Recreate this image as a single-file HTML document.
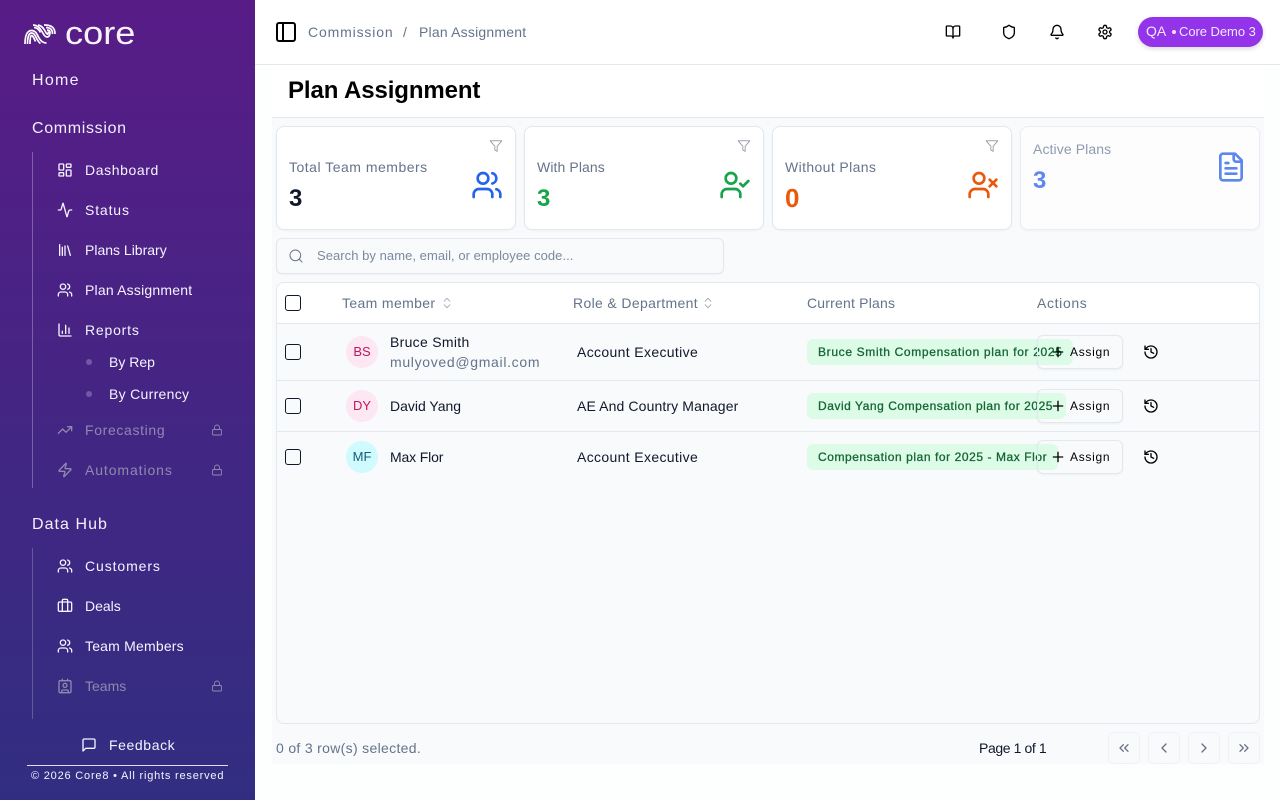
<!DOCTYPE html>
<html lang="en"><head><meta charset="utf-8"><title>Plan Assignment</title>
<style>
*{box-sizing:border-box}
html,body{margin:0;padding:0;width:1280px;height:800px;overflow:hidden;background:#fdfefe;font-family:"Liberation Sans",sans-serif}
.t{position:absolute;white-space:nowrap;line-height:20px;height:20px;font-size:14px}
.a{position:absolute}
svg.i{position:absolute;fill:none;stroke:currentColor;stroke-width:2;stroke-linecap:round;stroke-linejoin:round}
#side{position:absolute;left:0;top:0;width:255px;height:800px;background:linear-gradient(180deg,#581c87,#312e81);color:#f5f3ff}
#side .h{font-size:16px;color:#f3effa}
#side .off{color:#8f89ad}
.card{position:absolute;top:126px;width:240px;height:104px;background:#fff;border:1px solid #e2e8f0;border-radius:8px;box-shadow:0 1px 2px rgba(0,0,0,.04)}
.lbl{color:#64748b}
.num{font-size:24px;font-weight:700;line-height:28px;height:28px}
.th{color:#64748b}
.cb{position:absolute;left:285px;width:16px;height:16px;border:1.3px solid #0f172a;border-radius:3px;background:transparent}
.av{position:absolute;left:346px;width:32px;height:32px;border-radius:50%;font-size:13px;line-height:31px;text-align:center}
.name{color:#0f172a}
.bd{position:absolute;left:807px;height:26px;background:#dcfce7;border-radius:6px;color:#166534;font-size:12px;font-weight:400;-webkit-text-stroke:.3px #166534;line-height:26px;padding-left:11px;white-space:nowrap;overflow:visible}
.btn{position:absolute;left:1037px;width:86px;height:34px;border:1px solid #e2e8f0;border-radius:6px;box-shadow:0 1px 2px rgba(0,0,0,.05)}
.pg{position:absolute;top:732px;width:32px;height:32px;border:1px solid #eef1f6;border-radius:6px;background:#f9fafc;color:#6b7280}
</style></head><body>
<svg width="0" height="0" style="position:absolute"><defs>
<symbol id="users" viewBox="0 0 24 24"><path d="M16 21v-2a4 4 0 0 0-4-4H6a4 4 0 0 0-4 4v2"/><circle cx="9" cy="7" r="4"/><path d="M22 21v-2a4 4 0 0 0-3-3.87"/><path d="M16 3.13a4 4 0 0 1 0 7.75"/></symbol>
<symbol id="lock" viewBox="0 0 24 24"><rect x="3" y="11" width="18" height="11" rx="2"/><path d="M7 11V7a5 5 0 0 1 10 0v4"/></symbol>
<symbol id="funnel" viewBox="0 0 24 24"><path d="M22 3H2l8 9.46V19l4 2v-8.54L22 3z"/></symbol>
<symbol id="history" viewBox="0 0 24 24"><path d="M3 12a9 9 0 1 0 9-9 9.75 9.75 0 0 0-6.74 2.74L3 8"/><path d="M3 3v5h5"/><path d="M12 7v5l4 2"/></symbol>
<symbol id="plus" viewBox="0 0 24 24"><path d="M5 12h14"/><path d="M12 5v14"/></symbol>
<symbol id="updown" viewBox="0 0 24 24"><path d="m7 15 5 5 5-5"/><path d="m7 9 5-5 5 5"/></symbol>
</defs></svg>

<div id="side">
<svg class="a" style="left:24px;top:24px" width="32" height="20" viewBox="0 0 32 20" fill="none" stroke="#fff" stroke-width="1.700">
<path d="M1 20C1 12 3 6.500 7.500 6.500c4.500 0 5.500 4 7.500 7.500 2 3.500 4 5 7.500 5"/>
<path d="M3.500 20C3.500 13 5 9 7.500 9c3 0 4 3.500 6 7 1.200 2 2 3 3 3.500"/>
<path d="M6 20c0-5 .5-8.500 1.500-8.500 1.500 0 2.500 3 4 6"/>
<path d="M9 1c4.500 0 7 3 9 6.500 2 3.500 3 5.500 5 5.500 2.500 0 3-3 3-5"/>
<path d="M10 3.500c3 0 5 2.300 6.500 5"/>
<path d="M14 1c3 .5 5 2.500 6.500 5 1.200 2 2 4.200 3 4.200.7 0 .8-1.500.8-2.700"/>
<path d="M20 1C27 1 31 3 31 10"/><path d="M22 3.500c4.500 0 6.500 2 6.500 6.500"/><path d="M23 6c2 0 3 1 3 2.500"/>
</svg>
<div class="a" style="left:65px;top:13px;font-size:32px;line-height:40px;letter-spacing:0;color:#f7f2fb;transform:scaleX(1.13);transform-origin:0 50%">core</div>
<div class="t h" style="left:32px;top:71px;letter-spacing:1.3px">Home</div>
<div class="t h" style="left:32px;top:119px;letter-spacing:.67px">Commission</div>
<div class="a" style="left:32px;top:152px;width:1px;height:336px;background:rgba(255,255,255,.28)"></div>

<svg class="i" style="left:57px;top:162px" width="16" height="16" viewBox="0 0 24 24"><rect x="3" y="3" width="7" height="9" rx="1"/><rect x="14" y="3" width="7" height="5" rx="1"/><rect x="14" y="12" width="7" height="9" rx="1"/><rect x="3" y="16" width="7" height="5" rx="1"/></svg>
<div class="t" style="left:85px;top:160px;letter-spacing:.6px">Dashboard</div>
<svg class="i" style="left:57px;top:202px" width="16" height="16" viewBox="0 0 24 24"><path d="M22 12h-2.480a2 2 0 0 0-1.930 1.460l-2.350 8.360a.25.25 0 0 1-.48 0L9.240 2.180a.25.25 0 0 0-.48 0l-2.350 8.360A2 2 0 0 1 4.490 12H2"/></svg>
<div class="t" style="left:85px;top:200px;letter-spacing:.85px">Status</div>
<svg class="i" style="left:57px;top:242px" width="16" height="16" viewBox="0 0 24 24"><path d="m16 6 4 14"/><path d="M12 6v14"/><path d="M8 8v12"/><path d="M4 4v16"/></svg>
<div class="t" style="left:85px;top:240px">Plans Library</div>
<svg class="i" style="left:57px;top:282px" width="16" height="16"><use href="#users"/></svg>
<div class="t" style="left:85px;top:280px;letter-spacing:.2px">Plan Assignment</div>
<svg class="i" style="left:57px;top:322px" width="16" height="16" viewBox="0 0 24 24"><path d="M3 3v16a2 2 0 0 0 2 2h16"/><path d="M18 17V9"/><path d="M13 17V5"/><path d="M8 17v-3"/></svg>
<div class="t" style="left:85px;top:320px;letter-spacing:.8px">Reports</div>
<div class="a" style="left:86px;top:359px;width:6px;height:6px;border-radius:50%;background:#7457a6"></div>
<div class="t" style="left:109px;top:352px">By Rep</div>
<div class="a" style="left:86px;top:391px;width:6px;height:6px;border-radius:50%;background:#7457a6"></div>
<div class="t" style="left:109px;top:384px;letter-spacing:.3px">By Currency</div>
<svg class="i off" style="left:57px;top:422px" width="16" height="16" viewBox="0 0 24 24"><polyline points="22 7 13.500 15.500 8.500 10.500 2 17"/><polyline points="16 7 22 7 22 13"/></svg>
<div class="t off" style="left:85px;top:420px;letter-spacing:.65px">Forecasting</div>
<svg class="i off" style="left:211px;top:423px;stroke-width:1.800" width="12" height="14"><use href="#lock"/></svg>
<svg class="i off" style="left:57px;top:462px" width="16" height="16" viewBox="0 0 24 24"><path d="M4 14a1 1 0 0 1-.78-1.630l9.900-10.200a.5.5 0 0 1 .86.46l-1.920 6.020A1 1 0 0 0 13 10h7a1 1 0 0 1 .78 1.630l-9.900 10.200a.5.5 0 0 1-.86-.46l1.920-6.020A1 1 0 0 0 11 14z"/></svg>
<div class="t off" style="left:85px;top:460px;letter-spacing:.9px">Automations</div>
<svg class="i off" style="left:211px;top:463px;stroke-width:1.800" width="12" height="14"><use href="#lock"/></svg>

<div class="t h" style="left:32px;top:515px;letter-spacing:1.05px">Data Hub</div>
<div class="a" style="left:32px;top:548px;width:1px;height:171px;background:rgba(255,255,255,.22)"></div>
<svg class="i" style="left:57px;top:558px" width="16" height="16"><use href="#users"/></svg>
<div class="t" style="left:85px;top:556px;letter-spacing:.9px">Customers</div>
<svg class="i" style="left:57px;top:598px" width="16" height="16" viewBox="0 0 24 24"><path d="M16 20V4a2 2 0 0 0-2-2h-4a2 2 0 0 0-2 2v16"/><rect x="2" y="6" width="20" height="14" rx="2"/></svg>
<div class="t" style="left:85px;top:596px">Deals</div>
<svg class="i" style="left:57px;top:638px" width="16" height="16"><use href="#users"/></svg>
<div class="t" style="left:85px;top:636px;letter-spacing:.2px">Team Members</div>
<svg class="i off" style="left:57px;top:678px" width="16" height="16" viewBox="0 0 24 24"><path d="M16 2v2"/><path d="M7 22v-2a2 2 0 0 1 2-2h6a2 2 0 0 1 2 2v2"/><path d="M8 2v2"/><circle cx="12" cy="11" r="3"/><rect x="3" y="4" width="18" height="18" rx="2"/></svg>
<div class="t off" style="left:85px;top:676px">Teams</div>
<svg class="i off" style="left:211px;top:679px;stroke-width:1.800" width="12" height="14"><use href="#lock"/></svg>

<svg class="i" style="left:81px;top:737px" width="16" height="16" viewBox="0 0 24 24"><path d="M21 15a2 2 0 0 1-2 2H7l-4 4V5a2 2 0 0 1 2-2h14a2 2 0 0 1 2 2z"/></svg>
<div class="t" style="left:109px;top:735px;letter-spacing:.6px">Feedback</div>
<div class="a" style="left:27px;top:765px;width:201px;height:1px;background:#e4dcf2"></div>
<div class="t" style="left:31px;top:766px;font-size:11px;letter-spacing:.8px">© 2026 Core8 • All rights reserved</div>
</div>

<div class="a" style="left:255px;top:0;width:1025px;height:65px;background:#fff;border-bottom:1px solid #e2e8f0"></div>
<svg class="i" style="left:274px;top:20px;color:#000" width="24" height="24" viewBox="0 0 24 24"><rect x="3" y="3" width="18" height="18" rx="2"/><path d="M9 3v18"/></svg>
<div class="t" style="left:308px;top:22px;color:#64748b;letter-spacing:.85px">Commission</div>
<div class="t" style="left:403px;top:22px;color:#64748b">/</div>
<div class="t" style="left:419px;top:22px;color:#64748b;letter-spacing:.2px">Plan Assignment</div>
<svg class="i" style="left:945px;top:24px;color:#000" width="16" height="16" viewBox="0 0 24 24"><path d="M12 7v14"/><path d="M3 18a1 1 0 0 1-1-1V4a1 1 0 0 1 1-1h5a4 4 0 0 1 4 4 4 4 0 0 1 4-4h5a1 1 0 0 1 1 1v13a1 1 0 0 1-1 1h-6a3 3 0 0 0-3 3 3 3 0 0 0-3-3z"/></svg>
<svg class="i" style="left:1001px;top:24px;color:#000" width="16" height="16" viewBox="0 0 24 24"><path d="M20 13c0 5-3.500 7.500-7.660 8.950a1 1 0 0 1-.67-.01C7.500 20.500 4 18 4 13V6a1 1 0 0 1 1-1c2 0 4.500-1.200 6.240-2.720a1.170 1.170 0 0 1 1.520 0C14.510 3.810 17 5 19 5a1 1 0 0 1 1 1z"/></svg>
<svg class="i" style="left:1049px;top:24px;color:#000" width="16" height="16" viewBox="0 0 24 24"><path d="M10.268 21a2 2 0 0 0 3.464 0"/><path d="M3.262 15.326A1 1 0 0 0 4 17h16a1 1 0 0 0 .74-1.673C19.410 13.956 18 12.499 18 8A6 6 0 0 0 6 8c0 4.499-1.411 5.956-2.738 7.326"/></svg>
<svg class="i" style="left:1097px;top:24px;color:#000" width="16" height="16" viewBox="0 0 24 24"><path d="M12.220 2h-.44a2 2 0 0 0-2 2v.18a2 2 0 0 1-1 1.730l-.43.25a2 2 0 0 1-2 0l-.15-.08a2 2 0 0 0-2.730.73l-.22.38a2 2 0 0 0 .73 2.730l.15.1a2 2 0 0 1 1 1.720v.51a2 2 0 0 1-1 1.740l-.15.09a2 2 0 0 0-.73 2.730l.22.38a2 2 0 0 0 2.730.73l.15-.08a2 2 0 0 1 2 0l.43.25a2 2 0 0 1 1 1.730V20a2 2 0 0 0 2 2h.44a2 2 0 0 0 2-2v-.18a2 2 0 0 1 1-1.730l.43-.25a2 2 0 0 1 2 0l.15.08a2 2 0 0 0 2.730-.73l.22-.39a2 2 0 0 0-.73-2.730l-.15-.08a2 2 0 0 1-1-1.740v-.5a2 2 0 0 1 1-1.740l.15-.09a2 2 0 0 0 .73-2.730l-.22-.38a2 2 0 0 0-2.730-.73l-.15.08a2 2 0 0 1-2 0l-.43-.25a2 2 0 0 1-1-1.730V4a2 2 0 0 0-2-2z"/><circle cx="12" cy="12" r="3"/></svg>
<div class="a" style="left:1138px;top:17px;width:125px;height:30px;border-radius:15px;background:#9333ea;box-shadow:0 2px 5px rgba(0,0,0,.15)"></div>
<div class="t" style="left:1146px;top:21px;color:#f3e8ff">QA</div>
<div class="a" style="left:1172px;top:30px;width:4px;height:4px;border-radius:50%;background:#f3e8ff"></div>
<div class="t" style="left:1179px;top:22px;font-size:13px;color:#f3e8ff;letter-spacing:-.05px">Core Demo 3</div>

<div class="a" style="left:272px;top:65px;width:992px;height:699px;background:#f8fafc"></div>
<div class="a" style="left:272px;top:65px;width:992px;height:53px;background:#fff;border-bottom:1px solid #e2e8f0"></div>
<div class="t" style="left:288px;top:76px;height:30px;line-height:30px;font-size:24px;font-weight:700;color:#000;letter-spacing:-.1px">Plan Assignment</div>

<div class="card" style="left:276px"></div>
<svg class="i" style="left:489px;top:139px;color:#9ca3af;stroke-width:1.700" width="14" height="14"><use href="#funnel"/></svg>
<div class="t lbl" style="left:289px;top:157px;letter-spacing:.5px">Total Team members</div>
<div class="t num" style="left:289px;top:185px;color:#0f172a">3</div>
<svg class="i" style="left:471px;top:169px;color:#2563eb" width="32" height="32"><use href="#users"/></svg>

<div class="card" style="left:524px"></div>
<svg class="i" style="left:737px;top:139px;color:#9ca3af;stroke-width:1.700" width="14" height="14"><use href="#funnel"/></svg>
<div class="t lbl" style="left:537px;top:157px;letter-spacing:.1px">With Plans</div>
<div class="t num" style="left:537px;top:185px;color:#16a34a">3</div>
<svg class="i" style="left:719px;top:169px;color:#16a34a" width="32" height="32" viewBox="0 0 24 24"><path d="M16 21v-2a4 4 0 0 0-4-4H6a4 4 0 0 0-4 4v2"/><circle cx="9" cy="7" r="4"/><polyline points="16 11 18 13 22 9"/></svg>

<div class="card" style="left:772px"></div>
<svg class="i" style="left:985px;top:139px;color:#9ca3af;stroke-width:1.700" width="14" height="14"><use href="#funnel"/></svg>
<div class="t lbl" style="left:785px;top:157px;letter-spacing:.38px">Without Plans</div>
<div class="t num" style="left:785px;top:184px;color:#ea580c;font-size:26px">0</div>
<svg class="i" style="left:967px;top:169px;color:#ea580c" width="32" height="32" viewBox="0 0 24 24"><path d="M16 21v-2a4 4 0 0 0-4-4H6a4 4 0 0 0-4 4v2"/><circle cx="9" cy="7" r="4"/><path d="m17 8 5 5"/><path d="m22 8-5 5"/></svg>

<div class="card" style="left:1020px;background:#fdfdfe;border-color:#eaeef4"></div>
<div class="t" style="left:1033px;top:139px;color:#8e9bb0;letter-spacing:.1px">Active Plans</div>
<div class="t num" style="left:1033px;top:167px;color:#5d87f0">3</div>
<svg class="i" style="left:1215px;top:151px;color:#5d87f0" width="32" height="32" viewBox="0 0 24 24"><path d="M15 2H6a2 2 0 0 0-2 2v16a2 2 0 0 0 2 2h12a2 2 0 0 0 2-2V7Z"/><path d="M14 2v4a2 2 0 0 0 2 2h4"/><path d="M10 9H8"/><path d="M16 13H8"/><path d="M16 17H8"/></svg>

<div class="a" style="left:276px;top:238px;width:448px;height:36px;background:#f8fafc;border:1px solid #e2e8f0;border-radius:6px;box-shadow:0 1px 2px rgba(0,0,0,.04)"></div>
<svg class="i" style="left:288px;top:248px;color:#6b7280;stroke-width:1.500" width="16" height="16" viewBox="0 0 24 24"><circle cx="11" cy="11" r="8"/><path d="m21 21-4.300-4.300"/></svg>
<div class="t" style="left:317px;top:246px;font-size:13px;color:#7d8a9d;letter-spacing:.05px">Search by name, email, or employee code...</div>

<div class="a" style="left:276px;top:282px;width:984px;height:442px;background:#f9fafc;border:1px solid #e2e8f0;border-radius:8px;overflow:hidden">
<div class="a" style="left:0;top:0;width:982px;height:41px;background:#fff;border-bottom:1px solid #e2e8f0"></div>
<div class="a" style="left:0;top:97px;width:982px;height:1px;background:#e2e8f0"></div>
<div class="a" style="left:0;top:148px;width:982px;height:1px;background:#e2e8f0"></div>
</div>
<div class="cb" style="top:295px"></div>
<div class="t th" style="left:342px;top:293px;letter-spacing:.36px">Team member</div>
<svg class="i" style="left:440px;top:296px;color:#94a3b8;stroke-width:1.500" width="14" height="14"><use href="#updown"/></svg>
<div class="t th" style="left:573px;top:293px;letter-spacing:.35px">Role &amp; Department</div>
<svg class="i" style="left:701px;top:296px;color:#94a3b8;stroke-width:1.500" width="14" height="14"><use href="#updown"/></svg>
<div class="t th" style="left:807px;top:293px;letter-spacing:.2px">Current Plans</div>
<div class="t th" style="left:1037px;top:293px;letter-spacing:.65px">Actions</div>

<div class="cb" style="top:344px"></div>
<div class="av" style="top:336px;background:#fce7f3;color:#be185d">BS</div>
<div class="t name" style="left:390px;top:332px;letter-spacing:.3px">Bruce Smith</div>
<div class="t" style="left:390px;top:352px;color:#64748b;letter-spacing:.68px">mulyoved@gmail.com</div>
<div class="t name" style="left:577px;top:342px;letter-spacing:.35px">Account Executive</div>
<div class="bd" style="top:339px;width:266px;letter-spacing:.66px">Bruce Smith Compensation plan for 2025</div>
<div class="btn" style="top:335px"></div>
<svg class="i" style="left:1050px;top:344px;color:#000" width="16" height="16"><use href="#plus"/></svg>
<div class="t" style="left:1070px;top:342px;font-size:12px;color:#000;letter-spacing:.7px">Assign</div>
<svg class="i" style="left:1143px;top:344px;color:#000" width="16" height="16"><use href="#history"/></svg>

<div class="cb" style="top:398px"></div>
<div class="av" style="top:390px;background:#fce7f3;color:#be185d">DY</div>
<div class="t name" style="left:390px;top:396px">David Yang</div>
<div class="t name" style="left:577px;top:396px;letter-spacing:.12px">AE And Country Manager</div>
<div class="bd" style="top:393px;width:259px;letter-spacing:.54px">David Yang Compensation plan for 2025</div>
<div class="btn" style="top:389px"></div>
<svg class="i" style="left:1050px;top:398px;color:#000" width="16" height="16"><use href="#plus"/></svg>
<div class="t" style="left:1070px;top:396px;font-size:12px;color:#000;letter-spacing:.7px">Assign</div>
<svg class="i" style="left:1143px;top:398px;color:#000" width="16" height="16"><use href="#history"/></svg>

<div class="cb" style="top:449px"></div>
<div class="av" style="top:441px;background:#cffafe;color:#155e75">MF</div>
<div class="t name" style="left:390px;top:447px;letter-spacing:-.15px">Max Flor</div>
<div class="t name" style="left:577px;top:447px;letter-spacing:.35px">Account Executive</div>
<div class="bd" style="top:444px;width:251px;letter-spacing:.57px">Compensation plan for 2025 - Max Flor</div>
<div class="btn" style="top:440px"></div>
<svg class="i" style="left:1050px;top:449px;color:#000" width="16" height="16"><use href="#plus"/></svg>
<div class="t" style="left:1070px;top:447px;font-size:12px;color:#000;letter-spacing:.7px">Assign</div>
<svg class="i" style="left:1143px;top:449px;color:#000" width="16" height="16"><use href="#history"/></svg>

<div class="t" style="left:276px;top:738px;color:#64748b;letter-spacing:.32px">0 of 3 row(s) selected.</div>
<div class="t" style="left:979px;top:738px;color:#0f172a;letter-spacing:-.4px">Page 1 of 1</div>
<div class="pg" style="left:1108px"></div><svg class="i" style="left:1116px;top:740px;color:#6b7280" width="16" height="16" viewBox="0 0 24 24"><path d="m11 17-5-5 5-5"/><path d="m18 17-5-5 5-5"/></svg>
<div class="pg" style="left:1148px"></div><svg class="i" style="left:1156px;top:740px;color:#6b7280" width="16" height="16" viewBox="0 0 24 24"><path d="m15 18-6-6 6-6"/></svg>
<div class="pg" style="left:1188px"></div><svg class="i" style="left:1196px;top:740px;color:#6b7280" width="16" height="16" viewBox="0 0 24 24"><path d="m9 18 6-6-6-6"/></svg>
<div class="pg" style="left:1228px"></div><svg class="i" style="left:1236px;top:740px;color:#6b7280" width="16" height="16" viewBox="0 0 24 24"><path d="m6 17 5-5-5-5"/><path d="m13 17 5-5-5-5"/></svg>
</body></html>
